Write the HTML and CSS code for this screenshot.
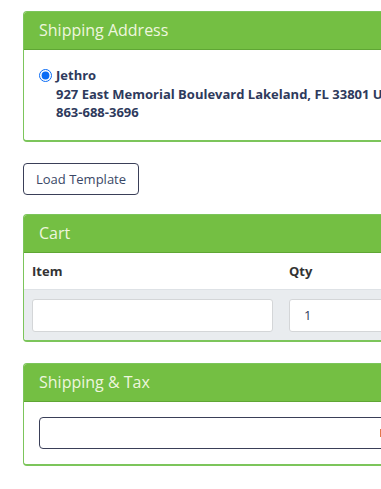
FILE: index.html
```html
<!DOCTYPE html>
<html>
<head>
<meta charset="utf-8">
<link rel="stylesheet" href="styles.css">
</head>
<body>
<div class="page">
  <section class="panel">
    <div class="panel-head">Shipping Address</div>
    <div class="panel-body addr-body">
      <label class="addr">
        <input type="radio" name="addr" checked>
        <span class="addr-text">
          <span>Jethro</span>
          <span>927 East Memorial Boulevard Lakeland, FL 33801 United States</span>
          <span>863-688-3696</span>
        </span>
      </label>
    </div>
  </section>

  <button class="btn">Load Template</button>

  <section class="panel cart">
    <div class="panel-head">Cart</div>
    <table class="cart-table">
      <thead>
        <tr><th class="col-item">Item</th><th class="col-qty">Qty</th></tr>
      </thead>
      <tbody>
        <tr>
          <td class="col-item"><input class="field" type="text"></td>
          <td class="col-qty"><input class="field" type="text" value="1"></td>
        </tr>
      </tbody>
    </table>
  </section>

  <section class="panel">
    <div class="panel-head">Shipping &amp; Tax</div>
    <div class="panel-body tax-body">
      <div class="select"><span class="mark"></span></div>
    </div>
  </section>
</div>
</body>
</html>
```

FILE: styles.css
```css
html, body {
  margin: 0;
  padding: 0;
  overflow: hidden;
  background: #ffffff;
}
body {
  font-family: "Open Sans", "Liberation Sans", sans-serif;
  color: #2e3a5c;
}
.page {
  width: 600px;
  padding: 11px 0 0 23px;
  display: flex;
  flex-direction: column;
  align-items: flex-start;
}
.panel {
  width: 600px;
  border: 1px solid #7cc55b;
  border-bottom-width: 2px;
  border-radius: 4px;
  overflow: hidden;
  box-sizing: border-box;
}
.panel-head {
  background: #74bf43;
  color: #eef6de;
  font-size: 16px;
  height: 37px;
  line-height: 37px;
  padding-left: 15px;
  border-bottom: 1px solid #5fa634;
}
.panel-body {
  padding: 15px;
}
.addr-body {
  padding: 16px 15px 18px;
}
.addr {
  display: flex;
  align-items: flex-start;
  gap: 4px;
}
.addr input {
  margin: 3px 0 0 0;
  width: 13px;
  height: 13px;
  accent-color: #0a6cf5;
}
.addr-text {
  display: flex;
  flex-direction: column;
  font-weight: 700;
  font-size: 13px;
  line-height: 18.5px;
  white-space: nowrap;
  color: #2e3a5c;
}
.btn {
  margin-top: 21px;
  height: 32px;
  padding: 0 12px;
  font-family: "Open Sans", "Liberation Sans", sans-serif;
  font-size: 13px;
  color: #3a4766;
  background: #ffffff;
  border: 1px solid #3a3f58;
  border-radius: 4px;
}
.cart {
  margin-top: 19px;
}
.panel + .panel {
  margin-top: 21px;
}
.cart-table {
  width: 100%;
  border-collapse: collapse;
}
.cart-table th {
  text-align: left;
  font-size: 13px;
  font-weight: 700;
  color: #333333;
  height: 36px;
  padding: 0 8px;
}
.cart-table td {
  background: #e9ecef;
  border-top: 1px solid #dee2e6;
  padding: 9px 8px 8px;
}
.col-item {
  width: 241px;
}
.field {
  display: block;
  width: 100%;
  height: 33px;
  box-sizing: border-box;
  border: 1px solid #d4d6d8;
  border-radius: 3px;
  background: #ffffff;
  font-family: "Open Sans", "Liberation Sans", sans-serif;
  font-size: 13px;
  color: #2e3a5c;
  padding: 0 14px;
}
.tax-body {
  padding: 15px 15px 15px;
}
.select {
  height: 32px;
  box-sizing: border-box;
  border: 1px solid #3a3f58;
  border-radius: 4px;
  display: flex;
  align-items: center;
  padding-left: 340px;
}
.mark {
  width: 3px;
  height: 8px;
  background: #e2774a;
}
```
